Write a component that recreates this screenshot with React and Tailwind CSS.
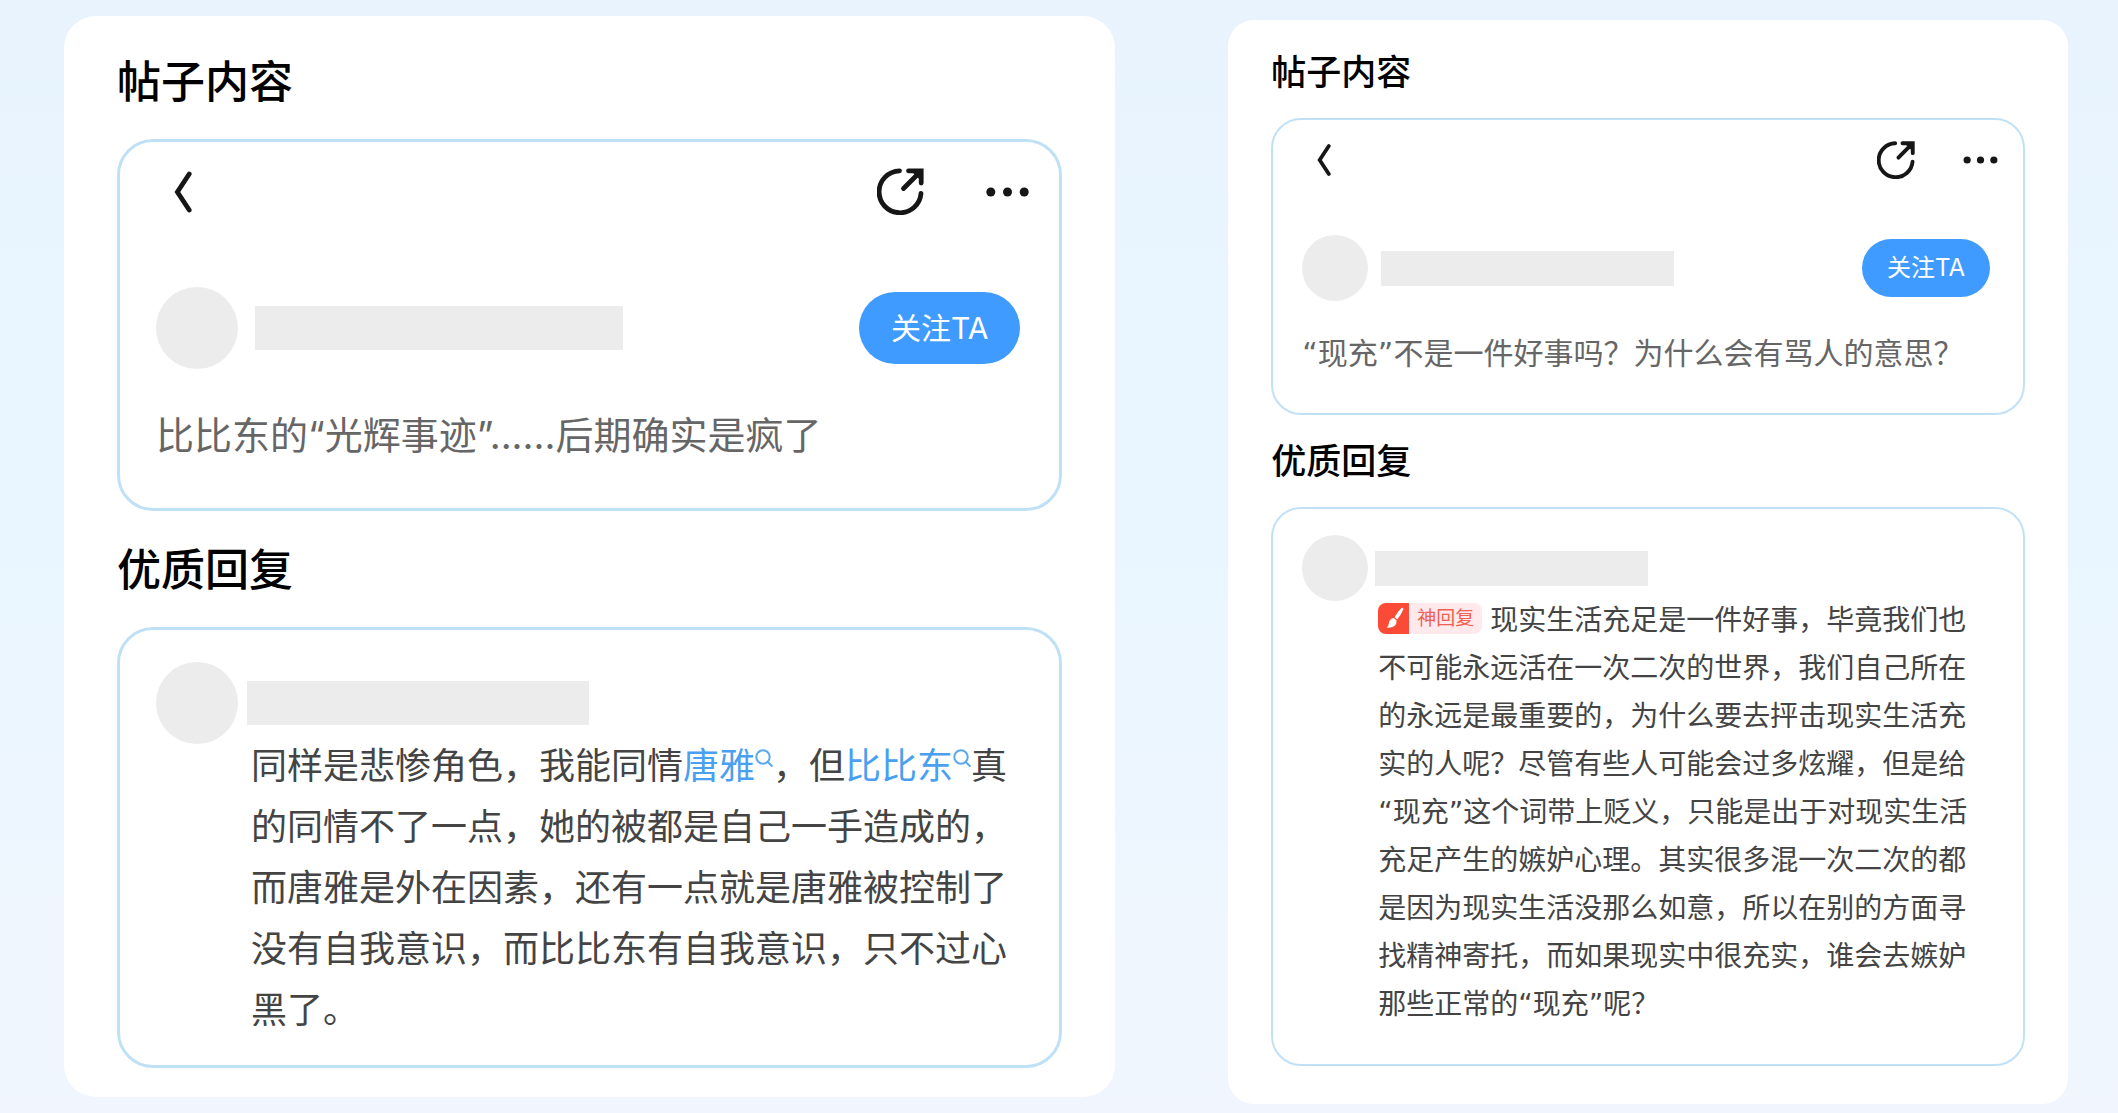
import React from 'react';

// Two scales of the same post card
const sizes = {
  lg: {
    card: 'rounded-[32px] px-[53px] pt-[34px] pb-[29px]',
    heading: 'text-[44px] leading-[64px]',
    headingTop: 'mb-[25px]',
    headingReply: 'mt-[27px] mb-[25px]',
    box: 'rounded-[36px] border-3',
    toolbar: 'pl-[54px] pr-[30px] pt-[26px]',
    chevron: 'w-[18px] h-[42px]',
    toolbarGap: 'gap-[62px]',
    share: 'w-[47px] h-[47px]',
    dots: 'w-[43px] h-[10px]',
    author: 'pl-[36px] pr-[39px] mt-[72px] gap-[17px]',
    avatar: 'w-[82px] h-[82px]',
    nameBar: 'w-[368px] h-[44px]',
    follow: 'w-[161px] h-[72px] text-[30px]',
    title: 'text-[38px] leading-[56px] px-[36px] mt-[38px] mb-[45px]',
    replyAuthor: 'pl-[36px] pt-[32px] gap-[9px]',
    replyBar: 'w-[342px] h-[44px]',
    reply: 'text-[36px] leading-[61px] pl-[131px] pr-[49px] -mt-[8px] pb-[24px]'
  },
  sm: {
    card: 'rounded-[26px] px-[43px] pt-[26px] pb-[38px]',
    heading: 'text-[35px] leading-[52px]',
    headingTop: 'mb-[20px]',
    headingReply: 'mt-[20px] mb-[20px]',
    box: 'rounded-[30px] border-2',
    toolbar: 'pl-[44px] pr-[25px] pt-[21px]',
    chevron: 'w-[14px] h-[34px]',
    toolbarGap: 'gap-[48px]',
    share: 'w-[38px] h-[38px]',
    dots: 'w-[35px] h-[8px]',
    author: 'pl-[29px] pr-[33px] mt-[56px] gap-[13px]',
    avatar: 'w-[66px] h-[66px]',
    nameBar: 'w-[293px] h-[35px]',
    follow: 'w-[128px] h-[58px] text-[24px]',
    title: "text-[30px] leading-[44px] px-[29px] mt-[31px] mb-[37px] font-['DejaVu_Sans','Noto_Sans_CJK_SC',sans-serif]",
    replyAuthor: 'pl-[29px] pt-[26px] gap-[7px]',
    replyBar: 'w-[273px] h-[35px]',
    reply: "text-[28px] leading-[48px] pl-[105px] pr-[44px] -mt-[4px] pb-[35px] font-['DejaVu_Sans','Noto_Sans_CJK_SC',sans-serif]"
  }
};

const ChevronIcon = ({ className }) => (
  <svg className={className} viewBox="0 0 18 42" fill="none" stroke="#161616" strokeWidth="4.8" strokeLinecap="round">
    <path d="M15.2 3 L3.4 21 L15.2 39" strokeLinejoin="miter" />
  </svg>
);

const ShareIcon = ({ className }) => (
  <svg className={className} viewBox="0 0 47 47" fill="none" stroke="#161616" strokeWidth="4.8" strokeLinecap="round">
    <path d="M22.5 2.8 A21 21 0 1 0 44 25.5" />
    <path d="M26.5 20.5 L43 4" />
    <path d="M31.5 2.8 H44.2 V15" />
    <path d="M34 3 L44.4 3 L44.4 13 Z" fill="#161616" stroke="none" />
  </svg>
);

const DotsIcon = ({ className }) => (
  <svg className={className} viewBox="0 0 43 10" fill="#161616">
    <circle cx="4.8" cy="5" r="4.5" />
    <circle cx="21.5" cy="5" r="4.5" />
    <circle cx="38.2" cy="5" r="4.5" />
  </svg>
);

const SearchIcon = () => (
  <svg className="inline-block w-[18px] h-[18px] align-[12px]" viewBox="0 0 18 18" fill="none" stroke="#5aa9ee" strokeWidth="2" strokeLinecap="round">
    <circle cx="8" cy="8" r="6.7" />
    <path d="M12.8 13 L16.8 17" />
  </svg>
);

const BrushIcon = () => (
  <svg className="w-[31px] h-[31px]" viewBox="0 0 31 31" fill="#fff">
    <path d="M23.2 5.2 Q25.3 4 25.4 6 Q23.5 11.5 19.2 16.4 L16.6 14.3 Q19.2 9 23.2 5.2 Z" />
    <path d="M15.8 15.1 L18.5 17.4 Q18.9 22.3 14.6 23.9 Q11.6 25 8.6 24.6 Q10.6 23.2 10.8 20.4 Q11.4 15.8 15.8 15.1 Z" />
  </svg>
);

const TopicLink = ({ children }) => (
  <a href="#" className="text-[#4aa0f0]">
    {children}
    <SearchIcon />
  </a>
);

function BestReplyBadge() {
  return (
    <span className="inline-flex items-center w-[104px] h-[31px] mr-2 rounded-[8px] overflow-hidden bg-[#ffe9ec] align-[-4px]">
      <span className="w-[31px] h-[31px] bg-[#fb4b37]">
        <BrushIcon />
      </span>
      <span className="flex-1 text-center text-[19px] leading-[31px] text-[#f0604f]">神回复</span>
    </span>
  );
}

function PostCard({ size, title, children }) {
  const s = sizes[size];

  return (
    <article className={`bg-white ${s.card}`}>
      <h2 className={`font-medium text-black ${s.heading} ${s.headingTop}`}>帖子内容</h2>
      <section className={`border-[#c0e1f5] ${s.box}`}>
        {/* Toolbar */}
        <div className={`flex items-center justify-between ${s.toolbar}`}>
          <button aria-label="返回">
            <ChevronIcon className={s.chevron} />
          </button>
          <div className={`flex items-center ${s.toolbarGap}`}>
            <button aria-label="分享">
              <ShareIcon className={s.share} />
            </button>
            <button aria-label="更多">
              <DotsIcon className={s.dots} />
            </button>
          </div>
        </div>

        {/* Author */}
        <div className={`flex items-center ${s.author}`}>
          <div className={`shrink-0 rounded-full bg-[#ececec] ${s.avatar}`} />
          <div className={`bg-[#ececec] ${s.nameBar}`} />
          <button className={`ml-auto shrink-0 rounded-full bg-[#3f9bff] text-white ${s.follow}`}>关注TA</button>
        </div>

        <p className={`text-[#666] ${s.title}`}>{title}</p>
      </section>

      <h2 className={`font-medium text-black ${s.heading} ${s.headingReply}`}>优质回复</h2>
      <section className={`border-[#c0e1f5] ${s.box}`}>
        <div className={`flex items-center ${s.replyAuthor}`}>
          <div className={`shrink-0 rounded-full bg-[#ececec] ${s.avatar}`} />
          <div className={`bg-[#ececec] ${s.replyBar}`} />
        </div>
        <p className={`text-[#444] ${s.reply}`}>{children}</p>
      </section>
    </article>
  );
}

function App() {
  return (
    <main
      lang="zh-CN"
      className="min-h-screen grid grid-cols-[1.252fr_1fr] items-start gap-x-[113px] pl-[64px] pr-[50px] pt-4 bg-linear-to-b from-[#e8f3fe] via-[#eaf6ff] to-[#f1f6fe] font-['Inter','Noto_Sans_CJK_SC',sans-serif]"
    >
      <PostCard size="lg" title="比比东的“光辉事迹”......后期确实是疯了">
        同样是悲惨角色，我能同情<TopicLink>唐雅</TopicLink>，但<TopicLink>比比东</TopicLink>真的同情不了一点，她的被都是自己一手造成的，而唐雅是外在因素，还有一点就是唐雅被控制了没有自我意识，而比比东有自我意识，只不过心黑了。
      </PostCard>

      <div className="pt-1">
        <PostCard size="sm" title="“现充”不是一件好事吗？为什么会有骂人的意思？">
          <BestReplyBadge />
          现实生活充足是一件好事，毕竟我们也不可能永远活在一次二次的世界，我们自己所在的永远是最重要的，为什么要去抨击现实生活充实的人呢？尽管有些人可能会过多炫耀，但是给“现充”这个词带上贬义，只能是出于对现实生活充足产生的嫉妒心理。其实很多混一次二次的都是因为现实生活没那么如意，所以在别的方面寻找精神寄托，而如果现实中很充实，谁会去嫉妒那些正常的“现充”呢？
        </PostCard>
      </div>
    </main>
  );
}

export default App;
